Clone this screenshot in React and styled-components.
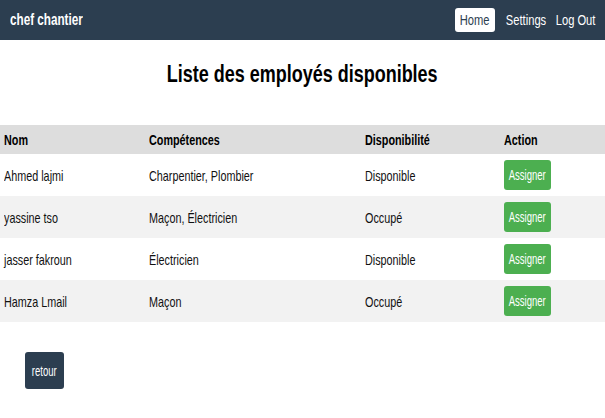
import React from "react";
import styled, { createGlobalStyle } from "styled-components";

const Global = createGlobalStyle`
  html, body { margin: 0; padding: 0; background: #fff; }
  body { font-family: "Liberation Sans", Arial, sans-serif; color: #111; }
`;

/* The reference uses a narrow grotesque; squeeze Arial-metric text horizontally */
const Narrow = styled.span`
  display: inline-block;
  white-space: nowrap;
  transform: scaleX(${(p) => p.$sx || 0.72});
  transform-origin: ${(p) => p.$origin || "left"} center;
`;

const Navbar = styled.nav`
  height: 40px;
  background: #2c3e50;
  display: flex;
  align-items: center;
  justify-content: space-between;
  padding: 0 10px;
  box-sizing: border-box;
`;

const Brand = styled.div`
  color: #fff;
  font-weight: bold;
  font-size: 16px;
`;

const Links = styled.div`
  display: flex;
  align-items: center;
  gap: 10px;
`;

const NavLink = styled.a`
  display: flex;
  justify-content: center;
  width: ${(p) => p.$w}px;
  font-size: 15.5px;
  color: ${(p) => (p.$active ? "#2c3e50" : "#fff")};
  background: ${(p) => (p.$active ? "#fff" : "transparent")};
  border-radius: 3px;
  height: 24px;
  line-height: 24px;
  text-decoration: none;
`;

const Title = styled.h2`
  text-align: center;
  font-size: 23px;
  font-weight: bold;
  margin: 21px 0 38px;
  line-height: 26px;
  color: #000;
`;

const Table = styled.table`
  width: 100%;
  border-collapse: collapse;
  table-layout: fixed;
`;

const Th = styled.th`
  background: #dddddd;
  text-align: left;
  font-weight: bold;
  font-size: 15px;
  height: 29px;
  padding: 0 4px;
  color: #000;
`;

const Row = styled.tr`
  background: ${(p) => (p.$striped ? "#f2f2f2" : "#fff")};
`;

const Td = styled.td`
  font-size: 15px;
  height: 42px;
  padding: 0 4px;
  color: #111;
`;

const AssignButton = styled.button`
  display: flex;
  align-items: center;
  justify-content: center;
  width: 47px;
  height: 30px;
  padding: 0;
  background: #4caf50;
  color: #fff;
  border: none;
  border-radius: 3px;
  font-family: inherit;
  font-size: 14px;
  cursor: pointer;
`;

const Footer = styled.div`
  padding: 30px 25px;
`;

const BackButton = styled.button`
  display: flex;
  align-items: center;
  justify-content: center;
  width: 39px;
  height: 37px;
  padding: 0;
  background: #2c3e50;
  color: #fff;
  border: none;
  border-radius: 3px;
  font-family: inherit;
  font-size: 14px;
  cursor: pointer;
`;

const employees = [
  { nom: "Ahmed lajmi", comp: "Charpentier, Plombier", dispo: "Disponible" },
  { nom: "yassine tso", comp: "Maçon, Électricien", dispo: "Occupé" },
  { nom: "jasser fakroun", comp: "Électricien", dispo: "Disponible" },
  { nom: "Hamza Lmail", comp: "Maçon", dispo: "Occupé" },
];

export default function App() {
  return (
    <>
      <Global />
      <Navbar>
        <Brand><Narrow $sx={0.73}>chef chantier</Narrow></Brand>
        <Links>
          <NavLink $active $w={40} href="#"><Narrow $origin="center">Home</Narrow></NavLink>
          <NavLink $w={41} href="#"><Narrow $origin="center">Settings</Narrow></NavLink>
          <NavLink $w={39} href="#"><Narrow $origin="center">Log Out</Narrow></NavLink>
        </Links>
      </Navbar>
      <Title><Narrow $origin="center" $sx={0.782}>Liste des employés disponibles</Narrow></Title>
      <Table>
        <colgroup>
          <col style={{ width: 145 }} />
          <col style={{ width: 216 }} />
          <col style={{ width: 139 }} />
          <col />
        </colgroup>
        <thead>
          <tr>
            <Th><Narrow>Nom</Narrow></Th>
            <Th><Narrow>Compétences</Narrow></Th>
            <Th><Narrow>Disponibilité</Narrow></Th>
            <Th><Narrow>Action</Narrow></Th>
          </tr>
        </thead>
        <tbody>
          {employees.map((e, i) => (
            <Row key={e.nom} $striped={i % 2 === 1}>
              <Td><Narrow>{e.nom}</Narrow></Td>
              <Td><Narrow>{e.comp}</Narrow></Td>
              <Td><Narrow>{e.dispo}</Narrow></Td>
              <Td>
                <AssignButton><Narrow $origin="center" $sx={0.68}>Assigner</Narrow></AssignButton>
              </Td>
            </Row>
          ))}
        </tbody>
      </Table>
      <Footer>
        <BackButton><Narrow $origin="center" $sx={0.68}>retour</Narrow></BackButton>
      </Footer>
    </>
  );
}
